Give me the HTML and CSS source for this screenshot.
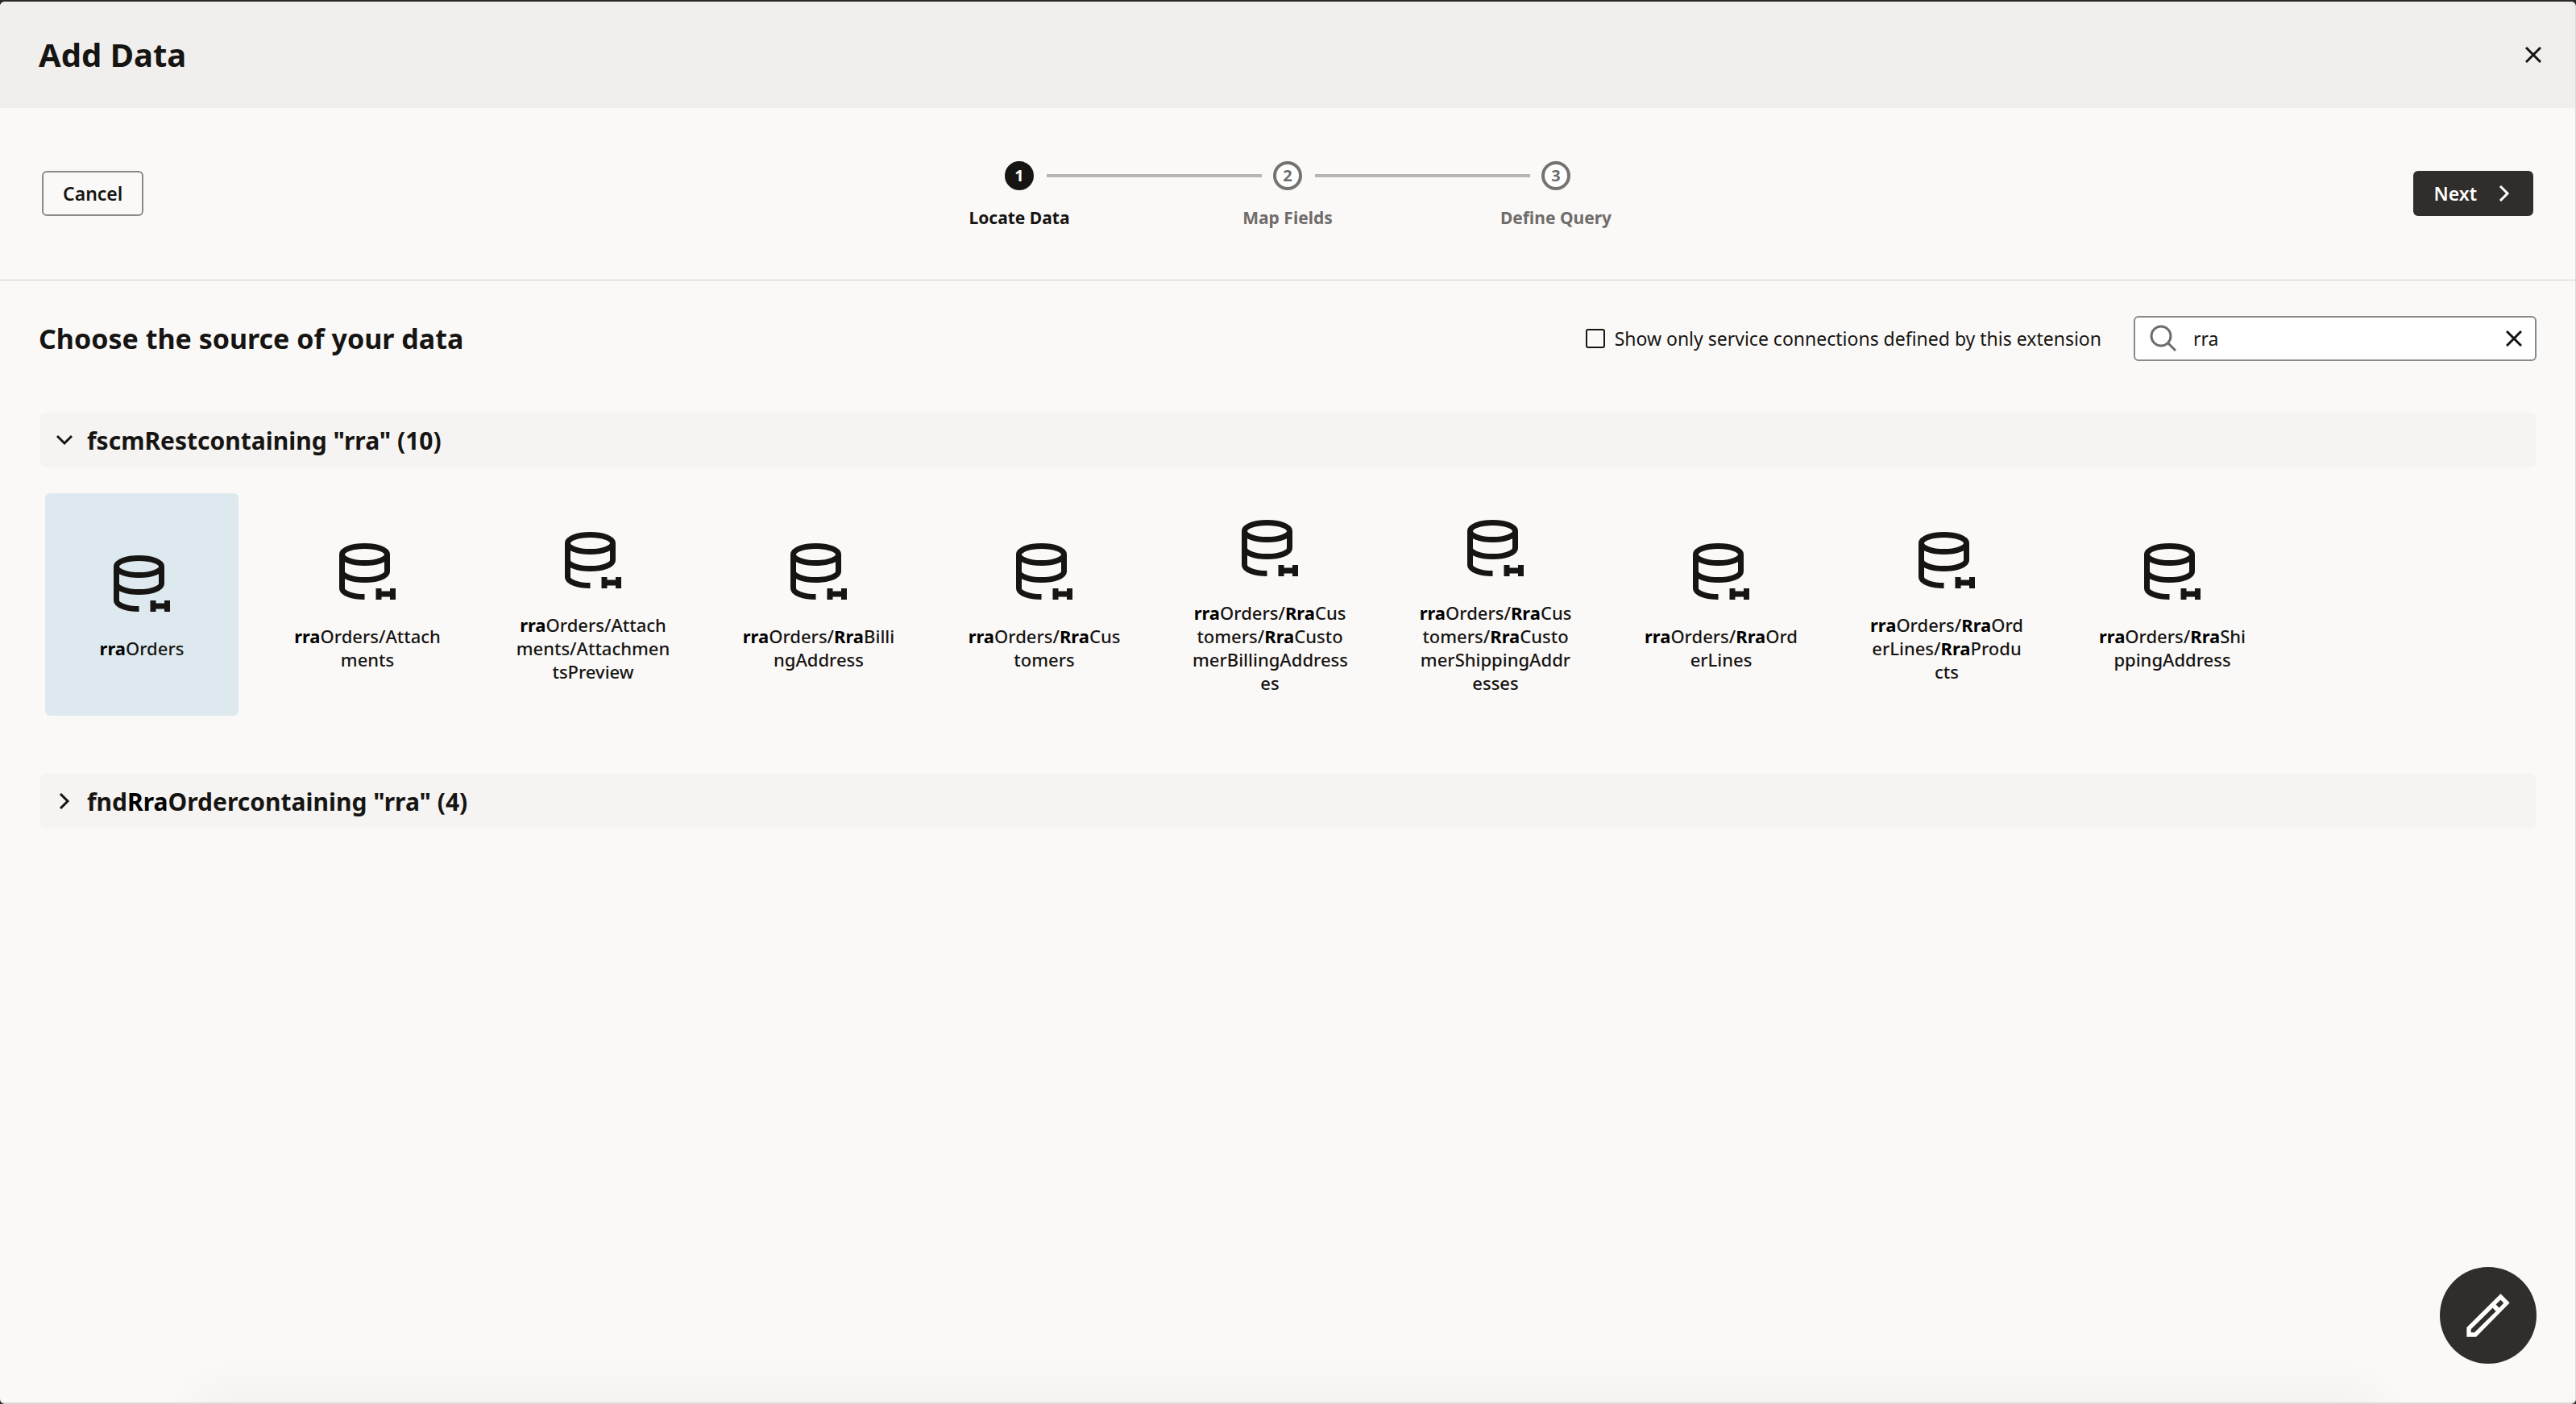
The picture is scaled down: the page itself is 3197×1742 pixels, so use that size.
FILE: index.html
```
<!DOCTYPE html>
<html lang="en">
<head>
  <meta charset="UTF-8" />
  <meta name="viewport" content="width=device-width, initial-scale=1" />
  <title>Add Data</title>
  <link rel="stylesheet" href="styles.css">
</head>
<body>

<svg class="sprite" aria-hidden="true">
  <symbol id="icon-db" viewBox="0 0 24 24">
    <ellipse cx="11" cy="6" rx="8" ry="3" fill="none" stroke="currentColor" stroke-width="2"/>
    <path d="M3 6v12c0 1.66 3.58 3 8 3M19 6v6c0 1.66-3.58 3-8 3s-8-1.34-8-3" fill="none" stroke="currentColor" stroke-width="2"/>
    <path d="M15 18h2v1h3v-1h2v4h-2v-1h-3v1h-2z" fill="currentColor"/>
  </symbol>
  <symbol id="icon-close" viewBox="0 0 20 20">
    <path d="M1 1l18 18M19 1L1 19" fill="none" stroke="currentColor" stroke-width="3"/>
  </symbol>
  <symbol id="icon-chevron" viewBox="0 0 20 20">
    <path d="M5 1l9 9-9 9" fill="none" stroke="currentColor" stroke-width="3"/>
  </symbol>
</svg>

<div class="dialog">
  <header class="dialog-header">
    <h1>Add Data</h1>
    <button class="icon-btn" type="button" aria-label="Close">
      <svg><use href="#icon-close"/></svg>
    </button>
  </header>

  <div class="wizard-bar">
    <button class="btn" type="button">Cancel</button>
    <ol class="steps">
      <li class="step current"><span class="step-number">1</span><span class="step-label">Locate Data</span></li>
      <li class="step"><span class="step-number">2</span><span class="step-label">Map Fields</span></li>
      <li class="step"><span class="step-number">3</span><span class="step-label">Define Query</span></li>
    </ol>
    <button class="btn btn-primary" type="button">Next <svg><use href="#icon-chevron"/></svg></button>
  </div>

  <main>
    <div class="toolbar">
      <h2>Choose the source of your data</h2>
      <label class="check"><input type="checkbox"> Show only service connections defined by this extension</label>
      <div class="search">
        <svg class="search-icon" viewBox="0 0 34 34"><path d="M23 23l9 9" /><circle cx="14" cy="14" r="12"/></svg>
        <input type="text" value="rra" aria-label="Filter">
        <button class="icon-btn" type="button" aria-label="Clear">
          <svg><use href="#icon-close"/></svg>
        </button>
      </div>
    </div>

    <section class="group">
      <h3>
        <button class="group-header open" type="button" aria-expanded="true">
          <svg><use href="#icon-chevron"/></svg><span>fscmRestcontaining "rra" (10)</span>
        </button>
      </h3>
      <div class="cards">
        <button class="card selected" type="button"><svg><use href="#icon-db"/></svg><span><b>rra</b>Orders</span></button>
        <button class="card" type="button"><svg><use href="#icon-db"/></svg><span><b>rra</b>Orders/Attach<wbr>ments</span></button>
        <button class="card" type="button"><svg><use href="#icon-db"/></svg><span><b>rra</b>Orders/Attach<wbr>ments/Attachmen<wbr>tsPreview</span></button>
        <button class="card" type="button"><svg><use href="#icon-db"/></svg><span><b>rra</b>Orders/<b>Rra</b>Billi<wbr>ngAddress</span></button>
        <button class="card" type="button"><svg><use href="#icon-db"/></svg><span><b>rra</b>Orders/<b>Rra</b>Cus<wbr>tomers</span></button>
        <button class="card" type="button"><svg><use href="#icon-db"/></svg><span><b>rra</b>Orders/<b>Rra</b>Cus<wbr>tomers/<b>Rra</b>Custo<wbr>merBillingAddress<wbr>es</span></button>
        <button class="card" type="button"><svg><use href="#icon-db"/></svg><span><b>rra</b>Orders/<b>Rra</b>Cus<wbr>tomers/<b>Rra</b>Custo<wbr>merShippingAddr<wbr>esses</span></button>
        <button class="card" type="button"><svg><use href="#icon-db"/></svg><span><b>rra</b>Orders/<b>Rra</b>Ord<wbr>erLines</span></button>
        <button class="card" type="button"><svg><use href="#icon-db"/></svg><span><b>rra</b>Orders/<b>Rra</b>Ord<wbr>erLines/<b>Rra</b>Produ<wbr>cts</span></button>
        <button class="card" type="button"><svg><use href="#icon-db"/></svg><span><b>rra</b>Orders/<b>Rra</b>Shi<wbr>ppingAddress</span></button>
      </div>
    </section>

    <section class="group">
      <h3>
        <button class="group-header" type="button" aria-expanded="false">
          <svg><use href="#icon-chevron"/></svg><span>fnd<b>Rra</b>Ordercontaining "rra" (4)</span>
        </button>
      </h3>
    </section>
  </main>
</div>

<button class="edit-btn" type="button" aria-label="Edit">
  <svg viewBox="0 0 24 24"><path fill-rule="evenodd" d="M17.8 2L22 6.2 6.4 22H2v-4.4zM17.8 4.8l-2.2 2.1 1.5 1.6 2.1-2.2zM14.1 8.5L4 18.5V20h1.6l10-9.9z"/></svg>
</button>

</body>
</html>
```
FILE: styles.css
```
* {
  margin: 0;
  padding: 0;
  box-sizing: border-box;
}

body {
  font-family: "Noto Sans", "Open Sans", sans-serif;
  font-size: 23px;
  color: #161513;
  background: #2c2926;
  min-height: 100vh;
  display: flex;
  padding-top: 2px;
}

button,
input {
  font: inherit;
  color: inherit;
}

button {
  background: none;
  border: none;
  cursor: pointer;
}

.sprite {
  position: absolute;
  width: 0;
  height: 0;
}

.dialog {
  position: relative;
  flex: 1;
  background: #fbf9f8;
  border-right: 1px solid #dcdbda;
  border-bottom: 2px solid #dcdbda;
  border-radius: 6px;
  overflow: hidden;
}

/* soft shade along the bottom edge */
.dialog::after {
  content: "";
  position: absolute;
  left: 250px;
  right: 250px;
  bottom: -20px;
  height: 20px;
  box-shadow: 0 0 60px rgba(0, 0, 0, 0.1);
}

.dialog-header {
  display: flex;
  align-items: center;
  justify-content: space-between;
  height: 132px;
  padding: 0 42px 0 48px;
  background: #f1efed;
}

h1 {
  font-size: 40px;
  line-height: 56px;
}

.icon-btn {
  display: flex;
  flex: none;
}

.icon-btn svg {
  width: 20px;
  height: 20px;
}

.wizard-bar {
  display: grid;
  grid-template-columns: 1fr auto 1fr;
  align-items: center;
  height: 214px;
  padding: 0 52px 2px;
  border-bottom: 1px solid #d2d0ce;
}

.btn {
  display: flex;
  align-items: center;
  justify-self: start;
  gap: 24px;
  height: 56px;
  padding: 0 24px;
  border: 2px solid #8b8987;
  border-radius: 6px;
  font-weight: 600;
}

.btn svg {
  width: 20px;
  height: 20px;
}

.btn-primary {
  justify-self: end;
  color: #fff;
  background: #312d2a;
  border-color: #312d2a;
}

.steps {
  display: flex;
  padding-top: 6px;
  list-style: none;
}

.step {
  position: relative;
  display: flex;
  flex-direction: column;
  align-items: center;
  gap: 18px;
  width: 333px;
  color: #6f6d6b;
  font-size: 21px;
  font-weight: 700;
  line-height: 32px;
}

.step-number {
  width: 36px;
  height: 36px;
  border: 4px solid #757371;
  border-radius: 50%;
  background: #fff;
  font-size: 20px;
  line-height: 28px;
  text-align: center;
}

/* connector to the previous step */
.step + .step::before {
  content: "";
  position: absolute;
  top: 16px;
  right: calc(50% + 32px);
  width: calc(100% - 66px);
  height: 4px;
  background: #b7b5b3;
}

.step.current {
  color: #161513;
}

.step.current .step-number {
  background: #161513;
  border-color: #161513;
  color: #fff;
}

main {
  padding: 44px 48px 0;
}

.toolbar {
  display: flex;
  align-items: center;
  gap: 40px;
  margin-bottom: 64px;
}

h2 {
  flex: 1;
  font-size: 34px;
  line-height: 56px;
}

.check {
  display: flex;
  align-items: center;
  gap: 12px;
}

.check input {
  appearance: none;
  width: 24px;
  height: 24px;
  border: 2px solid #161513;
  border-radius: 3px;
}

.search {
  display: flex;
  align-items: center;
  gap: 20px;
  width: 500px;
  height: 56px;
  padding: 0 16px 0 18px;
  background: #fff;
  border: 2px solid #8b8987;
  border-radius: 6px;
}

.search-icon {
  flex: none;
  width: 34px;
  height: 34px;
  fill: none;
  stroke: #6f6d6b;
  stroke-width: 3;
}

.search input {
  flex: 1;
  min-width: 0;
  border: none;
  outline: none;
  background: none;
}

.group {
  margin: 0 1px 72px 2px;
}

.group-header {
  display: flex;
  align-items: center;
  gap: 18px;
  width: 100%;
  height: 68px;
  padding: 0 20px;
  background: #f5f4f2;
  border-radius: 6px;
  font-size: 30px;
  font-weight: 700;
  text-align: left;
}

.group-header svg {
  width: 20px;
  height: 20px;
}

.group-header.open svg {
  transform: rotate(90deg);
}

.group-header b {
  color: #000;
  font-weight: 700;
}

.cards {
  display: flex;
  flex-wrap: wrap;
  gap: 40px;
  padding: 32px 6px 0;
}

.card {
  display: flex;
  flex-direction: column;
  align-items: center;
  justify-content: center;
  gap: 24px;
  width: 240px;
  height: 276px;
  border-radius: 6px;
  font-size: 22px;
  font-weight: 500;
  line-height: 29px;
}

.card span {
  max-width: 192px;
}

.card b {
  color: #000;
}

.card svg {
  width: 84px;
  height: 84px;
}

.card.selected {
  background: #dde9ee;
}

/* floating over the dialog */
.edit-btn {
  position: fixed;
  right: 49px;
  bottom: 50px;
  display: flex;
  align-items: center;
  justify-content: center;
  width: 120px;
  height: 120px;
  border-radius: 50%;
  background: #312d2a;
}

.edit-btn svg {
  width: 64px;
  height: 64px;
  fill: #fff;
}
```
